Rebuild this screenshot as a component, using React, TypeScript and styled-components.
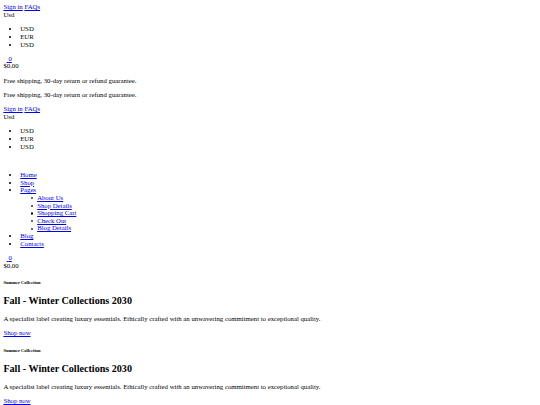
import React from 'react';
import styled, {createGlobalStyle} from 'styled-components';

// the page is a plain, unstyled document photographed at 1280px and shrunk to 540px
const k = 540 / 1280;
const s = (n: number) => `${(n * k).toFixed(3)}px`;

const GlobalStyle = createGlobalStyle`
  body {
    margin: ${s(8)};
    font-family: "Liberation Serif", "Times New Roman", serif;
    font-size: ${s(16)};
    line-height: ${s(18)};
    color: #000;
    background: #fff;
  }
`;

const Link = styled.a`
  color: #0000ee;
  text-decoration: underline;
  cursor: pointer;
`;

const Icon = styled.span`
  display: inline-block;
  width: 0;
  height: 0;
`;

const List = styled.ul`
  margin: ${s(16)} 0;
  padding-left: ${s(40)};
  list-style-type: disc;
`;

const SubList = styled.ul`
  margin: 0;
  padding-left: ${s(40)};
  list-style: none;

  > li::before {
    content: '';
    display: inline-block;
    box-sizing: border-box;
    width: ${s(5.5)};
    height: ${s(5.5)};
    margin-left: ${s(-14.5)};
    margin-right: ${s(9)};
    border: ${s(1.3)} solid #000;
    border-radius: 50%;
    vertical-align: ${s(1.5)};
  }
`;

const Para = styled.p`
  margin: ${s(16)} 0;
`;

const Line = styled.div``;

const Eyebrow = styled.h6`
  font-size: ${s(10.72)};
  line-height: ${s(12)};
  font-weight: bold;
  margin: ${s(24.98)} 0;
`;

const Title = styled.h2`
  font-size: ${s(24)};
  line-height: ${s(27)};
  font-weight: bold;
  margin: ${s(19.92)} 0;
`;

const currencies = ['USD', 'EUR', 'USD'];
const pages = ['About Us', 'Shop Details', 'Shopping Cart', 'Check Out', 'Blog Details'];
const shipping = 'Free shipping, 30-day return or refund guarantee.';

function TopLinks() {
    return (
        <>
            <Line>
                <Link href="#">Sign in</Link> <Link href="#">FAQs</Link>
            </Line>
            <Line>
                <span>Usd <Icon/></span>
                <List>
                    {currencies.map((c, i) => <li key={i}>{c}</li>)}
                </List>
            </Line>
        </>
    );
}

function NavOption() {
    return (
        <Line>
            <Link href="#"><Icon/></Link>{' '}
            <Link href="#"><Icon/></Link>{' '}
            <Link href="#"><Icon/> <span>0</span></Link>
            <Line>$0.00</Line>
        </Line>
    );
}

function Slide() {
    return (
        <Line>
            <Eyebrow>Summer Collection</Eyebrow>
            <Title>Fall - Winter Collections 2030</Title>
            <Para>A specialist label creating luxury essentials. Ethically crafted with an unwavering commitment to exceptional quality.</Para>
            <Link href="#">Shop now</Link>
        </Line>
    );
}

function App() {
    return (
        <>
            <GlobalStyle/>
            <Line>
                <TopLinks/>
                <NavOption/>
                <Para>{shipping}</Para>
            </Line>
            <header>
                <Para>{shipping}</Para>
                <TopLinks/>
                <Line>
                    <Link href="#"><Icon/></Link>
                </Line>
                <nav>
                    <List>
                        <li><Link href="#">Home</Link></li>
                        <li><Link href="#">Shop</Link></li>
                        <li>
                            <Link href="#">Pages</Link>
                            <SubList>
                                {pages.map(p => <li key={p}><Link href="#">{p}</Link></li>)}
                            </SubList>
                        </li>
                        <li><Link href="#">Blog</Link></li>
                        <li><Link href="#">Contacts</Link></li>
                    </List>
                </nav>
                <NavOption/>
            </header>
            <section>
                <Slide/>
                <Slide/>
            </section>
        </>
    );
}

export default App;
